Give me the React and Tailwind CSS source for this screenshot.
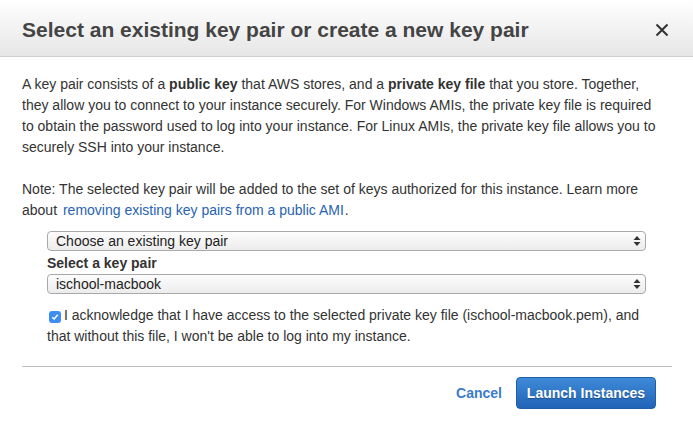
import React from "react";

function Arrows() {
  return (
    <svg width="8" height="12" viewBox="0 0 8 12" className="shrink-0">
      <path d="M4 1 L7.5 5 L0.5 5 Z" fill="#333" />
      <path d="M4 11 L7.5 7 L0.5 7 Z" fill="#333" />
    </svg>
  );
}

function Select({ children }) {
  return (
    <div className="flex items-center justify-between h-[20px] rounded-[4px] border border-[#a9a9a9] bg-gradient-to-b from-[#fdfdfd] to-[#ececec] pl-[8px] pr-[4px] text-[14px] text-[#222] leading-none">
      <span>{children}</span>
      <Arrows />
    </div>
  );
}

export default function App() {
  return (
    <div
      className="w-[693px] h-[429px] bg-white overflow-hidden text-[#333]"
      style={{ fontFamily: '"Liberation Sans", Arial, sans-serif' }}
    >
      <div className="h-[57px] bg-gradient-to-b from-[#ffffff] to-[#e6e6e6] border-b border-[#cfcfcf] flex items-center justify-between pl-[22px] pr-[24px]">
        <h1 className="text-[21px] font-bold text-[#444] leading-none pt-[3px]">
          Select an existing key pair or create a new key pair
        </h1>
        <svg width="14" height="14" viewBox="0 0 14 14" className="mt-[3px]">
          <path d="M1.5 1.5 L12.5 12.5 M12.5 1.5 L1.5 12.5" stroke="#333" strokeWidth="2" />
        </svg>
      </div>

      <div className="px-[22px] pt-[17px]">
        <p className="text-[14px] leading-[21px] whitespace-nowrap">
          A key pair consists of a <b>public key</b> that AWS stores, and a <b>private key file</b> that you store. Together,
          <br />
          they allow you to connect to your instance securely. For Windows AMIs, the private key file is required
          <br />
          to obtain the password used to log into your instance. For Linux AMIs, the private key file allows you to
          <br />
          securely SSH into your instance.
        </p>
        <p className="text-[14px] leading-[21px] whitespace-nowrap mt-[21px]">
          Note: The selected key pair will be added to the set of keys authorized for this instance. Learn more
          <br />
          about <span className="text-[#2863b5] ml-[2px] mr-[1px]">removing existing key pairs from a public AMI</span>.
        </p>

        <div className="pl-[25px] pr-[25px] mt-[10px]">
          <Select>Choose an existing key pair</Select>
          <div className="text-[14px] font-bold leading-[21px] mt-[2px] text-[#333]">Select a key pair</div>
          <Select>ischool-macbook</Select>
          <p className="text-[14px] leading-[21px] mt-[11px] whitespace-nowrap">
            <span className="inline-flex align-[-1px] items-center justify-center w-[12px] h-[12px] rounded-[3px] bg-[#3d8ef2] ml-[2px] mr-[3px]">
              <svg width="8" height="8" viewBox="0 0 8 8">
                <path d="M1.3 4.2 L3.2 6 L6.7 1.8" stroke="white" strokeWidth="1.5" fill="none" />
              </svg>
            </span>
            I acknowledge that I have access to the selected private key file (ischool-macbook.pem), and
            <br />
            that without this file, I won't be able to log into my instance.
          </p>
        </div>

        <div className="mt-[19px] border-t border-[#bdbdbd] w-[650px]" />

        <div className="flex justify-end items-center gap-[14px] pr-[15px] mt-[10px]">
          <button className="text-[14px] font-bold text-[#3a7ccb]">Cancel</button>
          <button
            className="h-[32px] w-[140px] rounded-[4px] border border-[#1f5ea8] bg-gradient-to-b from-[#3f8ad9] to-[#2064b6] text-white text-[14px] font-bold"
            style={{ textShadow: "0 1px 1px rgba(0,0,0,0.3)" }}
          >
            Launch Instances
          </button>
        </div>
      </div>
    </div>
  );
}
